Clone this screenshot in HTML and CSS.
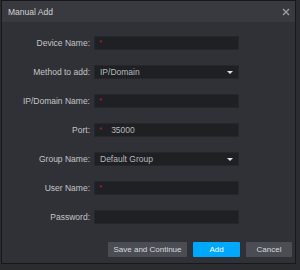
FILE: index.html
```html
<!DOCTYPE html>
<html>
<head>
    <title>Manual Add</title>
    <link rel="stylesheet" href="styles.css">
</head>
<body>
    <div class="dialog">
        <div class="title-bar">
            <span class="title">Manual Add</span>
            <svg class="close" width="8" height="8" viewBox="0 0 8 8">
                <path d="M1 1 L7 7 M7 1 L1 7" stroke="#9a9ca0" stroke-width="1.4" fill="none"/>
            </svg>
        </div>

        <div class="form">
            <label class="label">Device Name:</label>
            <div class="field"><span class="req">*</span></div>

            <label class="label">Method to add:</label>
            <div class="field select"><span class="value">IP/Domain</span><span class="arrow"></span></div>

            <label class="label">IP/Domain Name:</label>
            <div class="field"><span class="req">*</span></div>

            <label class="label">Port:</label>
            <div class="field"><span class="req">*</span><span class="value port">35000</span></div>

            <label class="label">Group Name:</label>
            <div class="field select"><span class="value">Default Group</span><span class="arrow"></span></div>

            <label class="label">User Name:</label>
            <div class="field"><span class="req">*</span></div>

            <label class="label">Password:</label>
            <div class="field"></div>
        </div>

        <div class="actions">
            <button class="btn">Save and Continue</button>
            <button class="btn primary">Add</button>
            <button class="btn">Cancel</button>
        </div>
    </div>
</body>
</html>
```

FILE: styles.css
```css
* {
    box-sizing: border-box;
}
body {
    margin: 0;
    background: #2a2c30;
    font-family: "Liberation Sans", Arial, sans-serif;
    font-size: 8.5px;
    color: #c4c5c8;
}
.dialog {
    margin-left: 1px;
    width: 295px;
    height: 264px;
    border: 1px solid #17181b;
    background: #2f3136;
    display: flex;
    flex-direction: column;
}
.title-bar {
    height: 21px;
    background: #383a3f;
    display: flex;
    align-items: center;
    justify-content: space-between;
    padding: 0 5px 0 6px;
}
.title {
    font-size: 8.5px;
    color: #d2d3d5;
}
.form {
    display: grid;
    grid-template-columns: 88px 145px;
    grid-auto-rows: 14px;
    column-gap: 4px;
    row-gap: 15px;
    padding-top: 14px;
    align-items: center;
}
.label {
    text-align: right;
    white-space: nowrap;
}
.field {
    height: 14px;
    background: #1f2024;
    border: 1px solid #26272b;
    border-radius: 1px;
    display: flex;
    align-items: center;
    padding-left: 4px;
    position: relative;
    color: #b8b9bc;
}
.req {
    color: #c8161d;
    font-size: 8px;
    align-self: flex-start;
    margin-top: 1px;
}
.port {
    margin-left: 9px;
}
.select {
    padding-left: 5px;
}
.arrow {
    position: absolute;
    right: 5px;
    top: 5px;
    width: 0;
    height: 0;
    border-left: 3px solid transparent;
    border-right: 3px solid transparent;
    border-top: 3px solid #e2e2e2;
}
.actions {
    display: flex;
    justify-content: flex-end;
    gap: 6px;
    margin-top: 18px;
    padding-right: 3px;
}
.btn {
    height: 15px;
    border: none;
    border-radius: 1px;
    background: #4a4d53;
    color: #d8d9db;
    font-family: "Liberation Sans", Arial, sans-serif;
    font-size: 8px;
    padding: 0;
}
.btn:nth-child(1) {
    width: 79px;
}
.btn.primary {
    width: 47px;
    background: #00a8fb;
    color: #ffffff;
}
.btn:nth-child(3) {
    width: 46px;
}
```
